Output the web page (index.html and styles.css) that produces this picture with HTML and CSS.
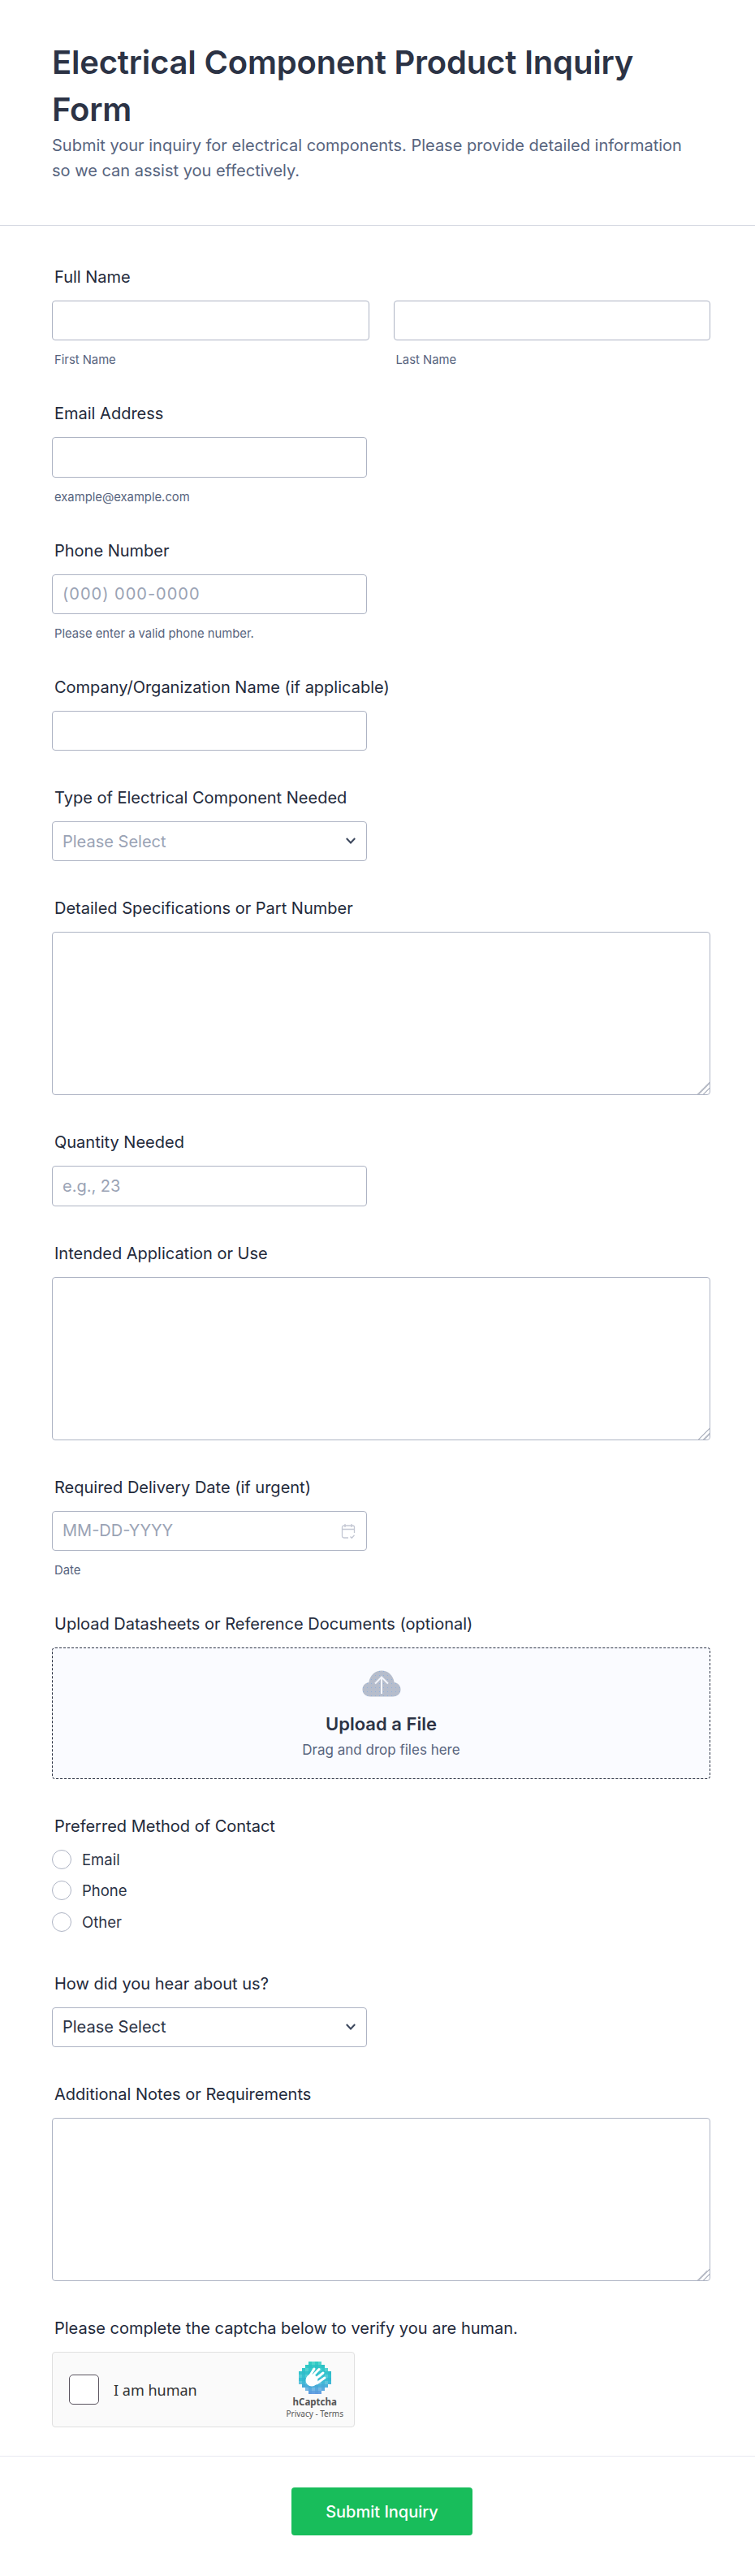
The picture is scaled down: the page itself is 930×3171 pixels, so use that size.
FILE: index.html
```html
<!DOCTYPE html>
<html lang="en">
<head>
<meta charset="utf-8">
<title>Electrical Component Product Inquiry Form</title>
<link rel="stylesheet" href="styles.css">
</head>
<body>
<header class="head">
  <h1 class="title">Electrical Component Product Inquiry Form</h1>
  <p class="subtitle">Submit your inquiry for electrical components. Please provide detailed information so we can assist you effectively.</p>
</header>
<form class="form">
  <div class="field">
    <label class="label">Full Name</label>
    <div class="name-row">
      <div class="name-col"><input class="input full" type="text"><div class="sub">First Name</div></div>
      <div class="name-col"><input class="input full" type="text"><div class="sub">Last Name</div></div>
    </div>
  </div>
  <div class="field">
    <label class="label">Email Address</label>
    <input class="input" type="text">
    <div class="sub">example@example.com</div>
  </div>
  <div class="field">
    <label class="label">Phone Number</label>
    <input class="input phone" type="text" placeholder="(000) 000-0000">
    <div class="sub">Please enter a valid phone number.</div>
  </div>
  <div class="field">
    <label class="label">Company/Organization Name (if applicable)</label>
    <input class="input" type="text">
  </div>
  <div class="field">
    <label class="label">Type of Electrical Component Needed</label>
    <div class="select-wrap">
      <select class="input full select placeholder"><option>Please Select</option></select>
      <svg class="chevron" width="12" height="8" viewBox="0 0 12 8"><path d="M.8 1 6 6.500 11.200 1" fill="none" stroke="#3b465c" stroke-width="2"/></svg>
    </div>
  </div>
  <div class="field">
    <label class="label">Detailed Specifications or Part Number</label>
    <textarea class="area"></textarea>
  </div>
  <div class="field">
    <label class="label">Quantity Needed</label>
    <input class="input" type="text" placeholder="e.g., 23">
  </div>
  <div class="field">
    <label class="label">Intended Application or Use</label>
    <textarea class="area"></textarea>
  </div>
  <div class="field">
    <label class="label">Required Delivery Date (if urgent)</label>
    <div class="select-wrap">
      <input class="input full" type="text" placeholder="MM-DD-YYYY">
      <svg class="calendar" width="18" height="20" viewBox="0 0 18 20" fill="none" stroke="#c3c7d3" stroke-width="1.300"><path d="M9 18H3.500A2 2 0 0 1 1.500 16V5A2 2 0 0 1 3.500 3h11a2 2 0 0 1 2 2v7M1.500 7.500h15M5 1v4M13 1v4M11.500 16.500l1.800 1.800 3.200-3.600"/></svg>
    </div>
    <div class="sub">Date</div>
  </div>
  <div class="field">
    <label class="label">Upload Datasheets or Reference Documents (optional)</label>
    <div class="upload">
      <svg class="cloud" width="48" height="33" viewBox="0 0 48 33">
        <defs><pattern id="dots" width="5" height="5" patternUnits="userSpaceOnUse"><rect width="5" height="5" fill="#b6bdcc"/><rect x="1" y="1" width="1" height="1" fill="#8fb0dc"/></pattern></defs>
        <path d="M10 32.500C4.500 32.500 .5 28.700.5 23.800c0-4.600 3.400-8.200 7.800-8.700C9.400 6.500 16 .5 24 .5s14.600 6 15.700 14.600c4.400.5 7.800 4.100 7.800 8.700 0 4.900-4 8.700-9.500 8.700z" fill="url(#dots)"/>
        <path d="M24 29V8.500M16 16.500l8-8 8 8" fill="none" stroke="#f3f5fb" stroke-width="2"/>
      </svg>
      <div class="upload-title">Upload a File</div>
      <div class="upload-text">Drag and drop files here</div>
    </div>
  </div>
  <div class="field">
    <label class="label">Preferred Method of Contact</label>
    <div class="radios">
      <label class="radio"><span class="dot"></span>Email</label>
      <label class="radio"><span class="dot"></span>Phone</label>
      <label class="radio"><span class="dot"></span>Other</label>
    </div>
  </div>
  <div class="field">
    <label class="label">How did you hear about us?</label>
    <div class="select-wrap">
      <select class="input full select"><option>Please Select</option></select>
      <svg class="chevron" width="12" height="8" viewBox="0 0 12 8"><path d="M.8 1 6 6.500 11.200 1" fill="none" stroke="#3b465c" stroke-width="2"/></svg>
    </div>
  </div>
  <div class="field">
    <label class="label">Additional Notes or Requirements</label>
    <textarea class="area"></textarea>
  </div>
  <div class="field">
    <label class="label">Please complete the captcha below to verify you are human.</label>
    <div class="captcha">
      <span class="check"></span>
      <span class="human">I am human</span>
      <div class="brand">
        <svg class="logo" width="40" height="40" viewBox="0 0 40 40">
          <defs>
            <linearGradient id="hc" x1="0" y1="0" x2="0" y2="1"><stop offset="0" stop-color="#2fcdc2"/><stop offset=".55" stop-color="#35bfd2"/><stop offset="1" stop-color="#6a9fe4"/></linearGradient>
            <pattern id="px" width="8" height="8" patternUnits="userSpaceOnUse"><rect width="4" height="4" fill="#fff" opacity=".16"/><rect x="4" y="4" width="4" height="4" fill="#1b6fc0" opacity=".1"/></pattern>
          </defs>
          <path d="M12 0h16v4h4v4h4v4h4v16h-4v4h-4v4h-4v4H12v-4H8v-4H4v-4H0V12h4V8h4V4h4z" fill="url(#hc)"/>
          <path d="M12 0h16v4h4v4h4v4h4v16h-4v4h-4v4h-4v4H12v-4H8v-4H4v-4H0V12h4V8h4V4h4z" fill="url(#px)"/>
          <circle cx="16" cy="23" r="7.500" fill="#fff"/>
          <path d="M12 20 19 9M16 19 25 9.500M20 22l10-8M22 27l10-7" stroke="#fff" stroke-width="3" stroke-linecap="round"/>
        </svg>
        <div class="brand-name">hCaptcha</div>
        <div class="brand-links">Privacy - Terms</div>
      </div>
    </div>
  </div>
  <div class="actions">
    <button class="submit" type="button">Submit Inquiry</button>
  </div>
</form>
</body>
</html>
```

FILE: styles.css
```css
* { box-sizing: border-box; }
html, body { margin: 0; padding: 0; background: #fff; }
body { font-family: Inter, "Liberation Sans", sans-serif; color: #2c3345; }

.head { padding: 48px 64px 51px; border-bottom: 1px solid #d6d9e3; }
.title { margin: 0; font-size: 40px; line-height: 58px; font-weight: 600; letter-spacing: -0.2px; color: #2c3345; }
.subtitle { margin: 0; font-size: 20px; line-height: 31px; color: #57647e; }

.form { padding: 51px 0 0; }
.field { padding: 0 55px 46px 64px; }
.label { display: block; margin: 0 0 17px 3px; font-size: 20px; line-height: 24px; font-weight: 400; color: #232a3b; }
.name-row { display: flex; gap: 30px; }
.name-col { flex: 1 1 0; }

.input { display: block; width: 388px; height: 49.250px; padding: 0 12px; border: 1px solid #aeb4c4; border-radius: 4px; background: #fff; font-family: Inter, sans-serif; font-size: 20px; color: #2c3345; outline: none; }
.input.full { width: 100%; }
.input::placeholder { color: #9aa3b5; opacity: 1; }
.phone { letter-spacing: 1px; }
.select { appearance: none; }
.select.placeholder { color: #9aa3b5; }
.select-wrap { position: relative; width: 388px; }
.chevron { position: absolute; right: 14px; top: 20px; }
.calendar { position: absolute; right: 14px; top: 15px; }

.sub { margin: 16px 0 0 3px; font-size: 14.800px; line-height: 16px; color: #57647e; }

.area { display: block; width: 100%; height: 201px; padding: 8px 12px; border: 1px solid #aeb4c4; border-radius: 4px; background: #fff; font-family: Inter, sans-serif; font-size: 18px; outline: none; }
.area::-webkit-resizer { background: linear-gradient(135deg, transparent 50%, #bcc0ca 50%, #bcc0ca 58%, transparent 58%, transparent 72%, #bcc0ca 72%, #bcc0ca 80%, transparent 80%); }

.upload { display: flex; flex-direction: column; align-items: center; height: 162px; padding-top: 27px; border: 1px dashed #2c3345; border-radius: 4px; background: #fafbff; }
.cloud { display: block; }
.upload-title { margin-top: 19px; font-size: 22px; line-height: 28px; font-weight: 600; color: #2c3345; }
.upload-text { margin-top: 6px; font-size: 17px; line-height: 24px; color: #57647e; }

.radios { display: flex; flex-direction: column; gap: 14.500px; margin: 2px 0 6px; }
.radio { display: flex; align-items: center; gap: 13px; height: 24px; font-size: 18.500px; color: #2c3345; }
.dot { width: 24px; height: 24px; border: 1px solid #aeb4c4; border-radius: 50%; background: #fff; }

.captcha { display: flex; align-items: center; width: 373px; height: 93px; padding: 0 13px 0 20px; border: 1px solid #e0e0e0; border-radius: 4px; background: #fafafa; }
.check { width: 37px; height: 37px; border: 1px solid #5b5560; border-radius: 5px; background: #fff; }
.human { margin-left: 18px; font-family: "Noto Sans", sans-serif; font-size: 18px; color: #333; }
.brand { display: flex; flex-direction: column; align-items: center; margin-left: auto; }
.logo { display: block; }
.brand-name { margin-top: 2px; font-family: "Noto Sans", sans-serif; font-size: 11.500px; line-height: 16px; font-weight: 700; color: #555; }
.brand-links { font-family: "Noto Sans", sans-serif; font-size: 10px; line-height: 12px; color: #555; }

.actions { display: flex; justify-content: center; padding: 38px 0 49px 11px; border-top: 1px solid #e8e9f2; margin-top: -11px; }
.submit { width: 223px; height: 59px; padding: 0; border: 0; border-radius: 4px; background: #18bd5b; color: #fff; font-family: Inter, sans-serif; font-size: 20px; font-weight: 500; }
```
